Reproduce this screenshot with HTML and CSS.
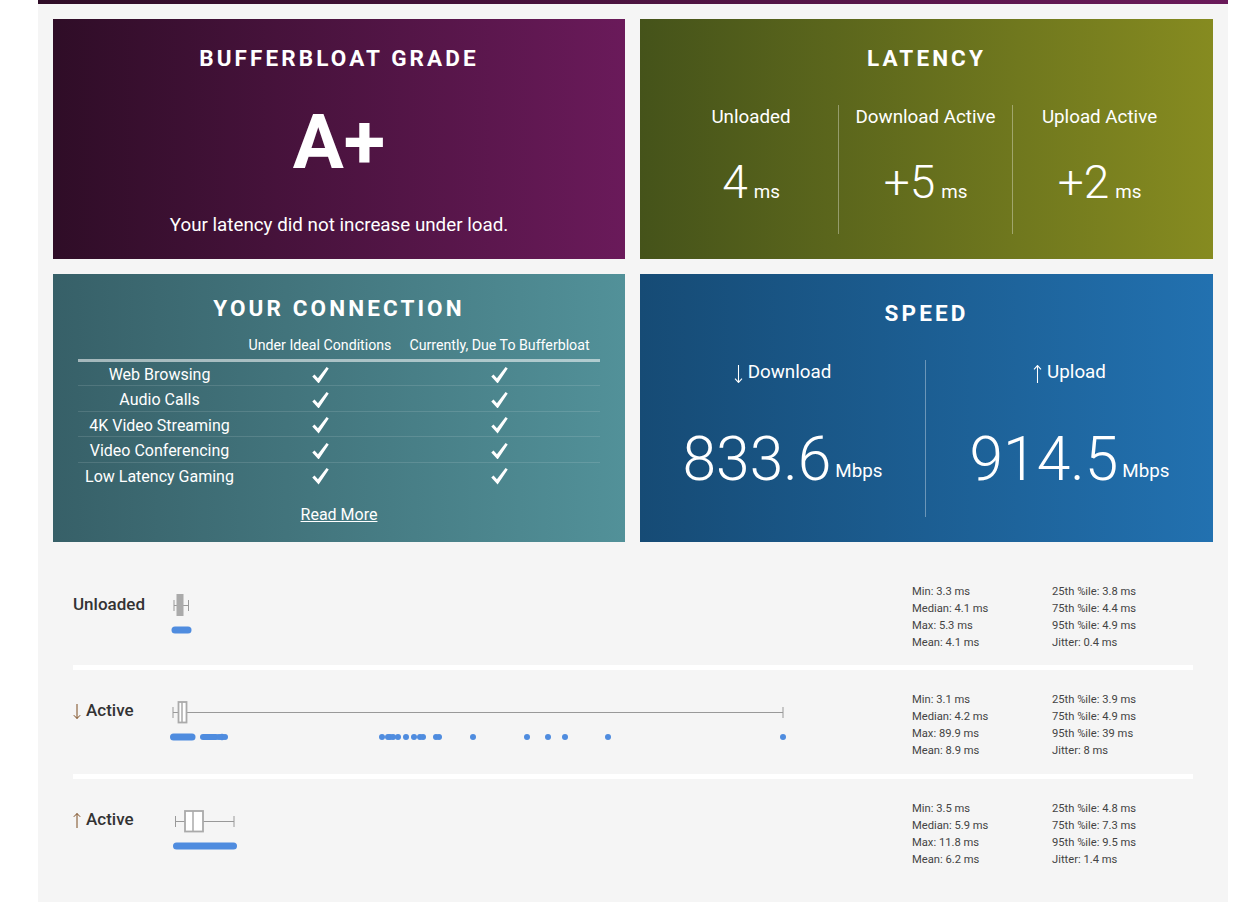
FILE: index.html
```html
<!DOCTYPE html>
<html lang="en">
<head>
<meta charset="utf-8">
<title>Bufferbloat Test Results</title>
<link rel="stylesheet" href="styles.css">
</head>
<body>
<main class="page">
  <div class="topbar"></div>
  <section class="cards">
    <article class="card card-grade">
      <h2 class="card-title">BUFFERBLOAT GRADE</h2>
      <div class="grade">A+</div>
      <p class="grade-note">Your latency did not increase under load.</p>
    </article>
    <article class="card card-latency">
      <h2 class="card-title">LATENCY</h2>
      <div class="lat-cols">
        <div class="lat-col"><div class="col-label">Unloaded</div><div class="lat-value"><span class="num">4</span> <span class="unit">ms</span></div></div>
        <div class="lat-col"><div class="col-label">Download Active</div><div class="lat-value"><span class="num">+5</span> <span class="unit">ms</span></div></div>
        <div class="lat-col"><div class="col-label">Upload Active</div><div class="lat-value"><span class="num">+2</span> <span class="unit">ms</span></div></div>
      </div>
    </article>
    <article class="card card-conn">
      <h2 class="card-title">YOUR CONNECTION</h2>
      <table class="conn-table">
        <colgroup><col class="c1"><col class="c2"><col class="c3"></colgroup>
        <thead><tr><th></th><th>Under Ideal Conditions</th><th>Currently, Due To Bufferbloat</th></tr></thead>
        <tbody>
          <tr><td>Web Browsing</td><td><svg class="check" viewBox="0 0 16 16"><path d="M0 9.2 2.2 7.2l3.3 3.6L13.9 0l2.1 1.4L6.2 16z"/></svg></td><td><svg class="check" viewBox="0 0 16 16"><path d="M0 9.2 2.2 7.2l3.3 3.6L13.9 0l2.1 1.4L6.2 16z"/></svg></td></tr>
          <tr><td>Audio Calls</td><td><svg class="check" viewBox="0 0 16 16"><path d="M0 9.2 2.2 7.2l3.3 3.6L13.9 0l2.1 1.4L6.2 16z"/></svg></td><td><svg class="check" viewBox="0 0 16 16"><path d="M0 9.2 2.2 7.2l3.3 3.6L13.9 0l2.1 1.4L6.2 16z"/></svg></td></tr>
          <tr><td>4K Video Streaming</td><td><svg class="check" viewBox="0 0 16 16"><path d="M0 9.2 2.2 7.2l3.3 3.6L13.9 0l2.1 1.4L6.2 16z"/></svg></td><td><svg class="check" viewBox="0 0 16 16"><path d="M0 9.2 2.2 7.2l3.3 3.6L13.9 0l2.1 1.4L6.2 16z"/></svg></td></tr>
          <tr><td>Video Conferencing</td><td><svg class="check" viewBox="0 0 16 16"><path d="M0 9.2 2.2 7.2l3.3 3.6L13.9 0l2.1 1.4L6.2 16z"/></svg></td><td><svg class="check" viewBox="0 0 16 16"><path d="M0 9.2 2.2 7.2l3.3 3.6L13.9 0l2.1 1.4L6.2 16z"/></svg></td></tr>
          <tr><td>Low Latency Gaming</td><td><svg class="check" viewBox="0 0 16 16"><path d="M0 9.2 2.2 7.2l3.3 3.6L13.9 0l2.1 1.4L6.2 16z"/></svg></td><td><svg class="check" viewBox="0 0 16 16"><path d="M0 9.2 2.2 7.2l3.3 3.6L13.9 0l2.1 1.4L6.2 16z"/></svg></td></tr>
        </tbody>
      </table>
      <a class="read-more" href="#">Read More</a>
    </article>
    <article class="card card-speed">
      <h2 class="card-title">SPEED</h2>
      <div class="speed-cols">
        <div class="speed-col"><div class="col-label"><svg class="arrow-lg" viewBox="0 0 8 17"><path d="M4 0V16.5M.7 12.8 4 16.5 7.3 12.8"/></svg>Download</div><div class="speed-value"><span class="big">833.6</span> <span class="unit">Mbps</span></div></div>
        <div class="speed-col"><div class="col-label"><svg class="arrow-lg" viewBox="0 0 8 17"><path d="M4 17V.5M.7 4.2 4 .5 7.3 4.2"/></svg>Upload</div><div class="speed-value"><span class="big">914.5</span> <span class="unit">Mbps</span></div></div>
      </div>
    </article>
  </section>

  <section class="rows">
    <div class="row row-first">
      <div class="row-label">Unloaded</div>
      <svg class="plot" height="103" viewBox="0 0 630 103" preserveAspectRatio="xMinYMin">
        <path class="whisk" d="M4 43.5H18.5M4 38v11M18.5 38v11"/>
        <rect class="box-dense" x="7" y="32.5" width="6" height="21"/>
        <line class="dots" x1="5" x2="18" y1="68" y2="68"/>
      </svg>
      <div class="stats">
        <div>Min: 3.3 ms</div><div>25th %ile: 3.8 ms</div>
        <div>Median: 4.1 ms</div><div>75th %ile: 4.4 ms</div>
        <div>Max: 5.3 ms</div><div>95th %ile: 4.9 ms</div>
        <div>Mean: 4.1 ms</div><div>Jitter: 0.4 ms</div>
      </div>
    </div>
    <div class="divider"></div>
    <div class="row">
      <div class="row-label row-label-active"><svg class="arrow-sm" viewBox="0 0 8 15"><path d="M4 0V14.5M.8 11.2 4 14.5 7.2 11.2"/></svg>Active</div>
      <svg class="plot" height="104" viewBox="0 0 630 104" preserveAspectRatio="xMinYMin">
        <path class="whisk" d="M3 42.5H613M3 37v11M613 37v11"/>
        <rect class="box" x="8.5" y="32" width="8" height="20.5"/>
        <line class="med" x1="12" x2="12" y1="32" y2="52.5"/>
        <line class="dots" x1="3.5" x2="22" y1="67" y2="67"/>
        <line class="dots-thin" x1="33" x2="46" y1="67" y2="67"/>
        <g class="outliers">
          <circle cx="49" cy="67" r="3"/><circle cx="52" cy="67" r="3.2"/>
          <circle cx="55" cy="67" r="3"/><circle cx="212" cy="67" r="3"/><circle cx="218" cy="67" r="3"/><circle cx="220" cy="67" r="3"/><circle cx="223" cy="67" r="3"/><circle cx="228" cy="67" r="3"/><circle cx="236" cy="67" r="3"/><circle cx="244" cy="67" r="3"/><circle cx="250" cy="67" r="3"/><circle cx="253" cy="67" r="3"/><circle cx="266" cy="67" r="3"/><circle cx="269" cy="67" r="3"/><circle cx="303" cy="67" r="3"/><circle cx="357" cy="67" r="3"/><circle cx="378" cy="67" r="3"/><circle cx="395" cy="67" r="3"/><circle cx="438" cy="67" r="3"/><circle cx="613" cy="67" r="3"/>
        </g>
      </svg>
      <div class="stats">
        <div>Min: 3.1 ms</div><div>25th %ile: 3.9 ms</div>
        <div>Median: 4.2 ms</div><div>75th %ile: 4.9 ms</div>
        <div>Max: 89.9 ms</div><div>95th %ile: 39 ms</div>
        <div>Mean: 8.9 ms</div><div>Jitter: 8 ms</div>
      </div>
    </div>
    <div class="divider"></div>
    <div class="row">
      <div class="row-label row-label-active"><svg class="arrow-sm" viewBox="0 0 8 15"><path d="M4 15V.5M.8 3.8 4 .5 7.2 3.8"/></svg>Active</div>
      <svg class="plot" height="104" viewBox="0 0 630 104" preserveAspectRatio="xMinYMin">
        <path class="whisk" d="M5.5 42.5H64M5.5 37v11M64 37v11"/>
        <rect class="box" x="15" y="32" width="18" height="20.5"/>
        <line class="med" x1="23" x2="23" y1="32" y2="52.5"/>
        <line class="dots" x1="6.5" x2="63.5" y1="67" y2="67"/>
      </svg>
      <div class="stats">
        <div>Min: 3.5 ms</div><div>25th %ile: 4.8 ms</div>
        <div>Median: 5.9 ms</div><div>75th %ile: 7.3 ms</div>
        <div>Max: 11.8 ms</div><div>95th %ile: 9.5 ms</div>
        <div>Mean: 6.2 ms</div><div>Jitter: 1.4 ms</div>
      </div>
    </div>
  </section>
</main>
</body>
</html>
```
FILE: styles.css
```css
* { box-sizing: border-box; }
html, body { margin: 0; background: #fff; }
body { padding: 0 21px 0 38px; font-family: Roboto, "Liberation Sans", sans-serif; color: #fff; }
.page { background: #f5f5f5; height: 902px; overflow: hidden; }
.topbar { height: 4px; background: linear-gradient(to right, #2f0d27, #6a1a5a); }

.cards { display: grid; grid-template-columns: 572px 573px; grid-template-rows: 240px 268px; gap: 15px; padding: 15px 15px 0; }
.card { overflow: hidden; text-align: center; }
.card-grade { background: linear-gradient(to right, #2f0d27, #6a1a5a); }
.card-latency { background: linear-gradient(to right, #45531a, #868b20); }
.card-conn { background: linear-gradient(to right, #376068, #529199); padding: 0 25px; }
.card-speed { background: linear-gradient(to right, #164b75, #2271b0); }

.card-title { margin: 27px 0 0; font-size: 22.5px; line-height: 24px; font-weight: 700; letter-spacing: 3.1px; }
.grade { margin-top: 27px; font-size: 76px; line-height: 90px; font-weight: 700; }
.grade-note { margin: 26px 0 0; font-size: 18.8px; line-height: 24px; }

.lat-cols { display: grid; grid-template-columns: repeat(3, 1fr); margin: 35px 27px 0 24px; height: 129px; }
.lat-col + .lat-col { border-left: 1px solid rgba(255,255,255,.35); }
.col-label { font-size: 18.8px; line-height: 24px; }
.lat-value { margin-top: 25px; line-height: 56px; }
.num { font-size: 46px; font-weight: 300; }
.unit { font-size: 18.8px; }
.lat-value .unit { margin-left: 2px; }

.card-conn .card-title { margin-top: 22px; }
.conn-table { width: 100%; table-layout: fixed; border-collapse: collapse; margin-top: 15px; font-size: 16px; }
.c1 { width: 163px; }
.c2 { width: 158px; }
.conn-table th { font-size: 14.2px; font-weight: 400; height: 25px; padding: 0 0 3px; border-bottom: 3px solid rgba(255,255,255,.55); white-space: nowrap; }
.conn-table td { height: 25.5px; padding: 3px 0 0; border-bottom: 1px solid rgba(255,255,255,.12); white-space: nowrap; vertical-align: middle; }
.conn-table tr:last-child td { border-bottom: 0; }
.check { display: block; width: 17px; height: 16.5px; margin: 0 auto; fill: #fff; }
.read-more { display: inline-block; margin-top: 15px; color: #fff; font-size: 16px; line-height: 24px; text-decoration: underline; }

.speed-cols { display: grid; grid-template-columns: 285px 1fr; margin: 35px 0 0; height: 157px; }
.speed-col + .speed-col { border-left: 1px solid rgba(255,255,255,.35); }
.speed-value { margin-top: 41px; line-height: 70px; }
.big { font-size: 60.5px; font-weight: 300; }
.speed-value .unit { vertical-align: 3px; }
.arrow-lg { display: inline-block; width: 9px; height: 18px; margin-right: 5px; vertical-align: -5px; fill: none; stroke: #fff; stroke-width: 1; }

.rows { padding: 20px 35px 0; }
.row { display: flex; height: 104px; color: #333; }
.row-first { height: 103px; }
.row-label { width: 97px; flex: none; padding-top: 31px; font-size: 17px; line-height: 22px; font-weight: 500; white-space: nowrap; }
.row-label-active { padding-top: 29px; }
.arrow-sm { display: inline-block; width: 8px; height: 15px; margin-right: 5px; vertical-align: -3px; fill: none; stroke: #7a4a1e; stroke-width: 1; }
.plot { flex: 1; min-width: 0; }
.whisk { fill: none; stroke: #999; stroke-width: 1; }
.box { fill: #fff; stroke: #aaa; stroke-width: 1.8; }
.box-dense { fill: #aaa; stroke: #aaa; stroke-width: 1; }
.med { stroke: #aaa; stroke-width: 1.5; }
.dots { stroke: #4f8cdf; stroke-width: 7; stroke-linecap: round; }
.dots-thin { stroke: #4f8cdf; stroke-width: 6; stroke-linecap: round; }
.outliers { fill: #4f8cdf; }
.stats { flex: none; width: 281px; display: grid; grid-template-columns: 140px 141px; grid-auto-rows: 17px; padding-top: 21px; font-size: 11.2px; line-height: 17px; color: #444; white-space: nowrap; }
.divider { height: 5px; background: #fff; }
```
